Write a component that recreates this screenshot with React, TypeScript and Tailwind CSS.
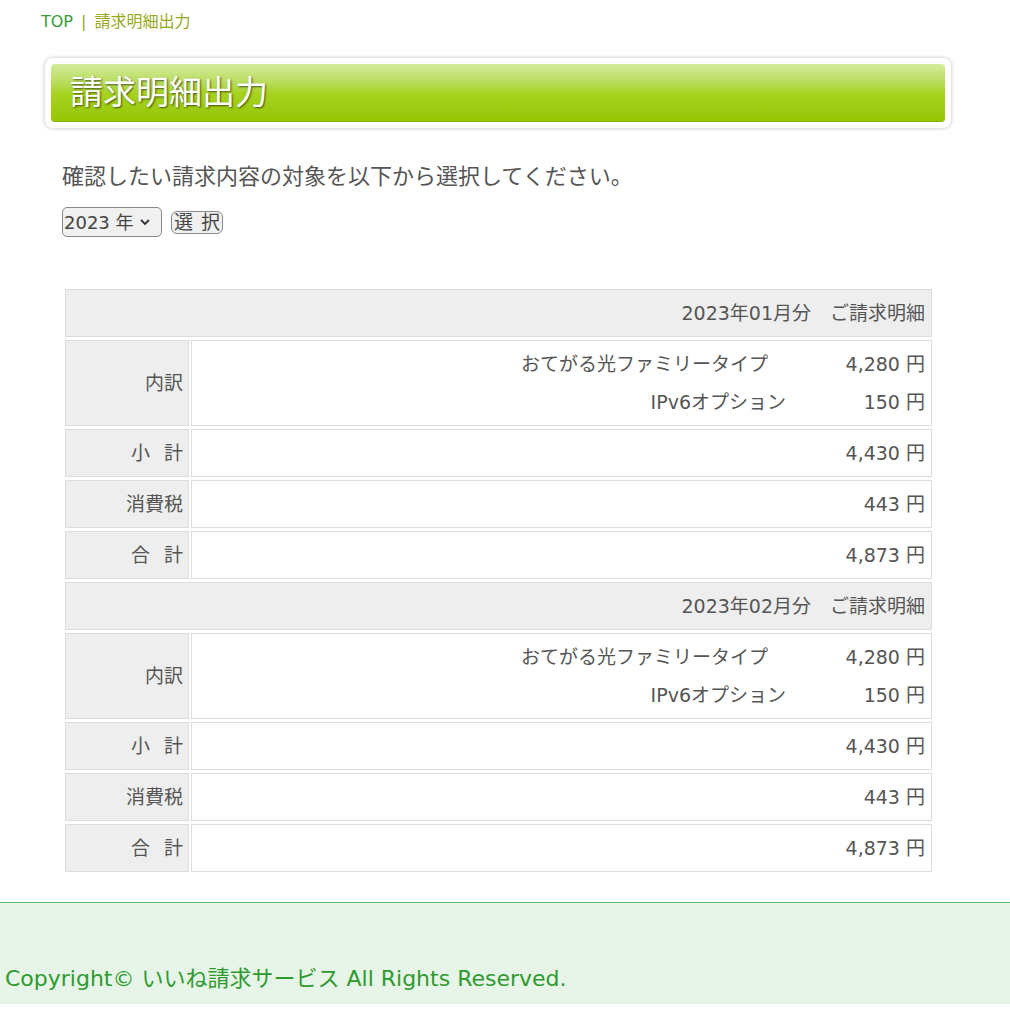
import React from "react";

const font = { fontFamily: '"DejaVu Sans", "Noto Sans CJK JP", sans-serif' };

type Bill = { month: string };

const bills: Bill[] = [{ month: "2023年01月分" }, { month: "2023年02月分" }];

function Label({ children }: { children: React.ReactNode }) {
  return (
    <div className="w-[124px] shrink-0 bg-[#eeeeee] border border-[#dddddd] flex items-center justify-end pr-[5px]">
      {children}
    </div>
  );
}

function Row({ label, amount }: { label: React.ReactNode; amount: string }) {
  return (
    <div className="flex gap-[2px] h-[48px]">
      <Label>{label}</Label>
      <div className="flex-1 border border-[#dddddd] bg-white flex items-center justify-end pr-[6px]">
        {amount}
      </div>
    </div>
  );
}

function BillTable({ bill }: { bill: Bill }) {
  return (
    <div className="flex flex-col gap-[3px]">
      <div className="h-[48px] bg-[#eeeeee] border border-[#dddddd] flex items-center justify-end pr-[6px]">
        {bill.month}　ご請求明細
      </div>
      <div className="flex gap-[2px] h-[86px]">
        <Label>内訳</Label>
        <div className="flex-1 border border-[#dddddd] bg-white flex flex-col justify-center gap-[14px] pr-[6px]">
          <div className="grid grid-cols-[1fr_139px] leading-[24px]">
            <span className="text-right pr-[18px]">おてがる光ファミリータイプ</span>
            <span className="text-right">4,280 円</span>
          </div>
          <div className="grid grid-cols-[1fr_139px] leading-[24px]">
            <span className="text-right">IPv6オプション</span>
            <span className="text-right">150 円</span>
          </div>
        </div>
      </div>
      <Row label={<span className="tracking-[14px] mr-[-14px]">小計</span>} amount="4,430 円" />
      <Row label="消費税" amount="443 円" />
      <Row label={<span className="tracking-[14px] mr-[-14px]">合計</span>} amount="4,873 円" />
    </div>
  );
}

export default function App() {
  return (
    <div className="w-full min-h-screen bg-white" style={font}>
      <div className="pt-[11px] pl-[41px] text-[16px] leading-[22px] flex items-center">
        <span className="text-[#3a9a3a]">TOP</span>
        <span className="text-[#96a81c] mx-[8px]">|</span>
        <span className="text-[#96a81c]">請求明細出力</span>
      </div>

      <div className="mt-[25px] ml-[45px] w-[906px] h-[70px] bg-white rounded-[8px] p-[6px] shadow-[0_0_4px_rgba(0,0,0,0.25)]">
        <div className="h-full rounded-[4px] bg-gradient-to-b from-[#d6ec9c] via-[#a8d320] to-[#96c600] border-b border-[#88b400] flex items-center pl-[19px]">
          <h1 className="text-white text-[33px] leading-none [text-shadow:1px_1px_2px_rgba(0,0,0,0.6)]">請求明細出力</h1>
        </div>
      </div>

      <p className="mt-[34px] ml-[62px] text-[22px] leading-[30px] text-[#555555]">
        確認したい請求内容の対象を以下から選択してください。
      </p>

      <div className="mt-[15px] ml-[62px] flex items-center gap-[9px]">
        <div className="w-[100px] h-[30px] border border-[#8a8a8a] rounded-[5px] bg-[#f0f0f0] flex items-center pl-[1px] text-[18px] text-[#444444]">
          <span>2023 年</span>
          <svg width="12" height="12" viewBox="0 0 12 12" className="ml-[5px]">
            <path d="M2 4l4 4 4-4" fill="none" stroke="#333" strokeWidth="1.8" />
          </svg>
        </div>
        <button className="h-[23px] px-[2px] border border-[#8a8a8a] rounded-[6px] bg-[#f0f0f0] text-[19px] leading-none text-[#444444] flex items-center gap-[8px]">
          <span>選</span>
          <span>択</span>
        </button>
      </div>

      <div className="mt-[52px] ml-[65px] w-[867px] flex flex-col gap-[3px] text-[19px] text-[#555555]">
        {bills.map((b) => (
          <BillTable key={b.month} bill={b} />
        ))}
      </div>

      <footer className="mt-[30px] border-t border-[#5fbf6f] bg-[#e6f5e8] h-[102px] flex items-end pb-[9px] pl-[5px]">
        <span className="text-[#2f9a2f] text-[22px]">Copyright© いいね請求サービス All Rights Reserved.</span>
      </footer>
    </div>
  );
}
